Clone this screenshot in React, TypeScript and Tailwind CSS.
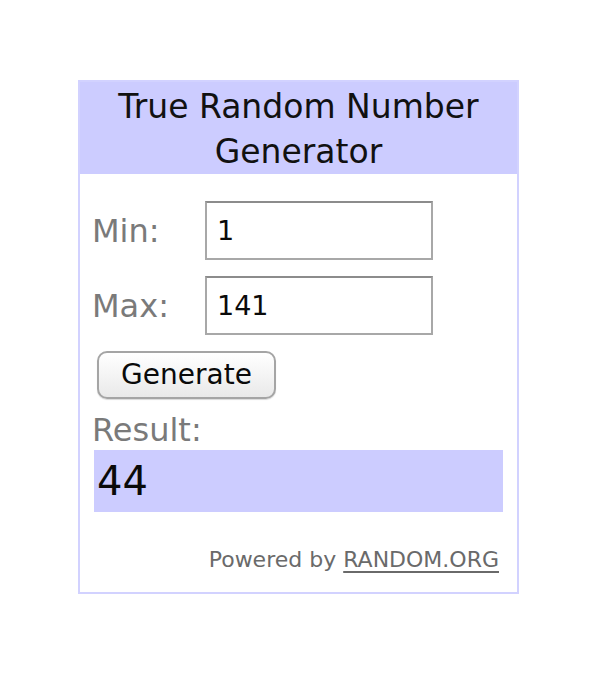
import React from 'react'

const font = { fontFamily: '"DejaVu Sans", Verdana, sans-serif' }

export default function App() {
  return (
    <div className="min-h-[680px] w-[597px] bg-white pl-[78px] pt-[80px]" style={font}>
      <div className="w-[441px] border-2 border-[#d2d2ff] bg-white">
        <div className="bg-[#ccccff] pt-[2px] text-center text-[33px] leading-[45px] text-[#111]">
          True Random Number
          <br />
          Generator
        </div>

        <div className="px-[12px] pt-[27px]">
          <div className="flex flex-col gap-[16px]">
            <div className="flex items-center">
              <label className="w-[113px] text-[32px] text-[#7a7a7a]">Min:</label>
              <input
                defaultValue="1"
                className="h-[59px] w-[228px] border-2 border-[#a8a8a8] border-t-[#8c8c8c] px-[10px] text-[27px] text-[#0a0a0a] outline-none"
              />
            </div>
            <div className="flex items-center">
              <label className="w-[113px] text-[32px] text-[#7a7a7a]">Max:</label>
              <input
                defaultValue="141"
                className="h-[59px] w-[228px] border-2 border-[#a8a8a8] border-t-[#8c8c8c] px-[10px] text-[27px] text-[#0a0a0a] outline-none"
              />
            </div>
            <div>
              <button className="ml-[5px] h-[48px] w-[179px] rounded-[10px] border-2 border-[#a5a5a5] bg-gradient-to-b from-white to-[#e9e9e9] text-[28px] leading-none text-[#0a0a0a] shadow-[0_1px_1px_rgba(0,0,0,0.15)]">
                Generate
              </button>
            </div>
          </div>

          <div className="mt-[12px] text-[32px] leading-[38px] text-[#7a7a7a]">Result:</div>
          <div className="ml-[2px] mt-[1px] flex h-[62px] w-[409px] items-center bg-[#ccccff] pl-[3px] text-[40px] text-[#0a0a0a]">
            44
          </div>

          <div className="flex justify-end pr-[6px] pt-[33px] pb-[17px] text-[22px] leading-[30px] text-[#6a6a6a]">
            <span>
              Powered by <a className="underline decoration-2 underline-offset-4">RANDOM.ORG</a>
            </span>
          </div>
        </div>
      </div>
    </div>
  )
}
